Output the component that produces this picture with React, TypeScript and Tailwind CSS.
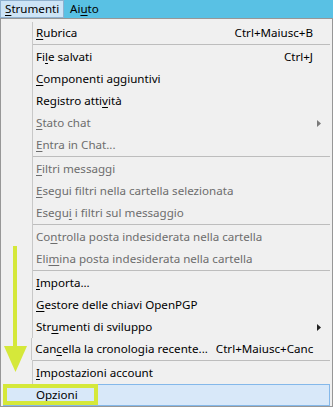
import React from 'react';

type Row =
  | { sep: true }
  | { sep?: false; label: string; shortcut?: string; sub?: boolean; off?: boolean; hot?: boolean };

const rows: Row[] = [
  { label: '&Rubrica', shortcut: 'Ctrl+Maiusc+B' },
  { sep: true },
  { label: 'Fi&le salvati', shortcut: 'Ctrl+J' },
  { label: '&Componenti aggiuntivi' },
  { label: 'Registro atti&vità' },
  { label: '&Stato chat', sub: true, off: true },
  { label: '&Entra in Chat...', off: true },
  { sep: true },
  { label: '&Filtri messaggi', off: true },
  { label: '&Esegui filtri nella cartella selezionata', off: true },
  { label: 'Esegu&i i filtri sul messaggio', off: true },
  { sep: true },
  { label: 'Co&ntrolla posta indesiderata nella cartella', off: true },
  { label: 'Eli&mina posta indesiderata nella cartella', off: true },
  { sep: true },
  { label: '&Importa...' },
  { label: '&Gestore delle chiavi OpenPGP' },
  { label: 'Str&umenti di sviluppo', sub: true },
  { label: 'Can&cella la cronologia recente...', shortcut: 'Ctrl+Maiusc+Canc' },
  { sep: true },
  { label: '&Impostazioni account' },
  { label: 'Opzioni', hot: true },
];

// "&" marks the access key, like a Windows menu resource
function Label({ text }: { text: string }) {
  const i = text.indexOf('&');
  if (i < 0) return <>{text}</>;
  return (
    <>
      {text.slice(0, i)}
      <span className="underline underline-offset-[2px]">{text[i + 1]}</span>
      {text.slice(i + 2)}
    </>
  );
}

function MenuRow({ row }: { row: Row }) {
  if (row.sep) {
    return (
      <div className="flex h-[2px]">
        <div className="w-[30px] border-r border-[#c8c8c8]" />
        <div className="flex-1 border-t border-[#bdbdbd]" />
      </div>
    );
  }
  return (
    <div
      className={`flex h-[22px] items-center ${row.off ? 'text-[#6d6d6d]' : 'text-black'} ${
        row.hot ? 'border border-[#84b8ea] bg-[#d8e8f9]' : ''
      }`}
    >
      <div className={`h-full ${row.hot ? 'w-[29px]' : 'w-[30px] border-r border-[#c8c8c8]'}`} />
      <div className={`ml-[3px] flex-1 whitespace-nowrap ${row.hot ? 'underline underline-offset-[2px]' : ''}`}>
        <Label text={row.label} />
      </div>
      {row.shortcut && <div className="ml-[8px] whitespace-nowrap">{row.shortcut}</div>}
      <div className="flex w-[17px] items-center pl-[4px]">
        {row.sub && (
          <svg width="4" height="7" viewBox="0 0 4 7">
            <path d="M0 0 L4 3.5 L0 7 Z" fill={row.off ? '#7a7a7a' : '#222'} />
          </svg>
        )}
      </div>
    </div>
  );
}

export default function App() {
  return (
    <div
      className="relative h-[409px] w-[333px] overflow-hidden bg-white text-[11.6px] leading-none"
      style={{ fontFamily: '"Noto Sans", "Open Sans", sans-serif' }}
    >
      {/* menu bar */}
      <div className="flex h-[18px] items-stretch bg-[#59c1e4] text-black">
        <div className="flex w-[64px] items-center border border-[#8fb1cf] bg-[#cde4f6] pl-[4px]">
          <Label text="&Strumenti" />
        </div>
        <div className="flex items-center pl-[6px]">
          <Label text="Ai&uto" />
        </div>
      </div>

      {/* dropdown */}
      <div className="w-[333px] border border-[#979797] bg-[#f0f0f0] px-[2px] pt-[3px]">
        {rows.map((r, i) => (
          <MenuRow key={i} row={r} />
        ))}
      </div>

      {/* annotation: arrow + box round Opzioni */}
      <svg className="absolute left-0 top-[246px]" width="32" height="128" viewBox="0 0 32 128">
        <rect x="13" y="0" width="4" height="102" fill="#d5e83a" />
        <path d="M4 100 L27 100 L15.5 126 Z" fill="#d5e83a" />
      </svg>
      <div className="absolute left-[3px] top-[384px] h-[21px] w-[95px] border-[4px] border-[#d5e83a]" />
    </div>
  );
}
